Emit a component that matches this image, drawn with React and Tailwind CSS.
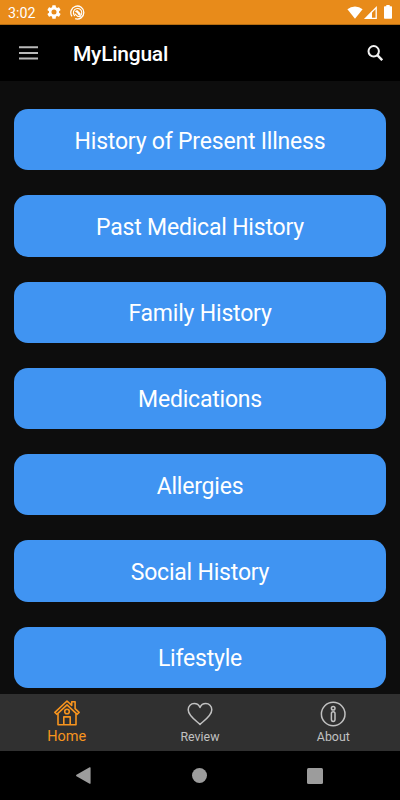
const sections = [
  'History of Present Illness',
  'Past Medical History',
  'Family History',
  'Medications',
  'Allergies',
  'Social History',
  'Lifestyle',
]

const StatusBar = () => (
  <div className="flex h-[25px] shrink-0 items-center border-b border-[#b56d12] bg-[#e88b1a] pl-2 pr-2 text-white">
    <span className="w-[39px] pt-px text-[14.2px] leading-6">3:02</span>
    <svg className="h-[14px] w-[14px]" viewBox="2 2 20 20" fill="currentColor">
      <path d="M19.14 12.94c.04-.3.06-.61.06-.94s-.02-.64-.07-.94l2.03-1.58a.5.5 0 0 0 .12-.61l-1.92-3.32a.5.5 0 0 0-.59-.22l-2.39.96a7 7 0 0 0-1.62-.94l-.36-2.54a.48.48 0 0 0-.48-.41h-3.84a.48.48 0 0 0-.47.41l-.36 2.54c-.59.24-1.13.57-1.62.94l-2.39-.96a.48.48 0 0 0-.59.22L2.74 8.87a.48.48 0 0 0 .12.61l2.03 1.58a6 6 0 0 0 0 1.88l-2.03 1.58a.5.5 0 0 0-.12.61l1.92 3.32c.12.22.37.29.59.22l2.39-.96c.5.38 1.03.7 1.62.94l.36 2.54c.05.24.24.41.48.41h3.84c.24 0 .44-.17.47-.41l.36-2.54a7 7 0 0 0 1.62-.94l2.39.96c.22.08.47 0 .59-.22l1.92-3.32a.48.48 0 0 0-.12-.61zM12 15.6a3.6 3.6 0 1 1 0-7.2 3.6 3.6 0 0 1 0 7.2" />
    </svg>
    <svg className="ml-[9px] h-[15px] w-[15px]" viewBox="0 0 15 15" fill="none" stroke="currentColor">
      <path d="M2 11.3A6.5 6.5 0 1 1 5.2 13.7" strokeWidth="1.3" />
      <path d="M5 11a4.2 4.2 0 1 1 5.4-.2" strokeWidth="1.1" />
      <path d="M4.8 6.2 7.2 4.9l3.3 3.4.3 2.8-2-.6L7.2 8z" fill="currentColor" stroke="none" />
      <path d="m4.6 8.6 3.2 2.8 3 .2" strokeWidth="1.1" />
    </svg>
    <div className="ml-auto flex items-center">
      <svg className="h-[13px] w-[16px]" viewBox="0 0 16 13" fill="currentColor">
        <path d="M.4 3.2a12 12 0 0 1 15.2 0L8 12.7z" />
      </svg>
      <svg className="ml-px h-[13px] w-[13px]" viewBox="0 0 13 13" fill="none" stroke="currentColor">
        <path d="M12.2 1.6v10.7H1.6z" strokeWidth="1.3" />
        <path d="M.4 12.9 8 5.2v7.7z" fill="currentColor" stroke="none" />
      </svg>
      <svg className="ml-[7px] h-[14px] w-2" viewBox="0 0 8 14" fill="currentColor">
        <path d="M2.3 0h3.4v1.3h1.6c.4 0 .7.3.7.7v11c0 .4-.3.7-.7.7H.7A.7.7 0 0 1 0 13V2c0-.4.3-.7.7-.7h1.6z" />
      </svg>
    </div>
  </div>
)

const Header = () => (
  <header className="flex h-14 shrink-0 items-center bg-black pl-[19px] pr-[17px]">
    <svg className="h-[14px] w-[19px] text-[#b9b9b9]" viewBox="0 0 19 14" fill="none" stroke="currentColor" strokeWidth="2">
      <path d="M0 1.2h19M0 6.9h19M0 12.6h19" />
    </svg>
    <h1 className="ml-[35px] mt-px text-[21px] font-medium leading-7 tracking-[-0.25px] text-white">MyLingual</h1>
    <svg className="ml-auto h-4 w-4 text-[#f2f2f2]" viewBox="0 0 16 16" fill="none" stroke="currentColor">
      <circle cx="6.7" cy="6.3" r="5.2" strokeWidth="2" />
      <path d="m10.3 10.2 4.9 5" strokeWidth="2.4" />
    </svg>
  </header>
)

const HomeIcon = () => (
  <svg className="h-[26px] w-[26px]" viewBox="0 0 26 26" fill="none" stroke="currentColor" strokeWidth="1.6" strokeLinejoin="round">
    <path d="M13 1 .9 12.4l1.9 1.9L13 4.8l10.2 9.5 1.9-1.9-4-3.7V1.8h-3.4v3.6z" />
    <path d="M4 13.4v11.4h18V13.4M9.8 24.8v-7.9h6.4v7.9" />
    <circle cx="13" cy="11.5" r="2.3" />
  </svg>
)

const ReviewIcon = () => (
  <svg className="h-[26px] w-[26px]" viewBox="0 0 26 26" fill="none" stroke="currentColor" strokeWidth="1.5" strokeLinejoin="round">
    <path d="M13 23.4C10.6 20.8 1.2 15.2 1.2 8.8c0-3.8 2.8-6.2 6-6.2 2.6 0 4.7 1.3 5.8 3.9 1.1-2.6 3.2-3.9 5.8-3.9 3.2 0 6 2.4 6 6.2 0 6.4-9.4 12-11.8 14.6z" />
  </svg>
)

const AboutIcon = () => (
  <svg className="h-[26px] w-[26px]" viewBox="0 0 26 26" fill="none" stroke="currentColor" strokeWidth="1.5">
    <circle cx="13.2" cy="13" r="11.8" />
    <circle cx="13.2" cy="7.2" r="1.8" />
    <rect x="11.4" y="10.8" width="3.6" height="9.6" rx="1.8" />
  </svg>
)

const TabBar = () => (
  <nav className="grid h-[57px] shrink-0 grid-cols-3 bg-[#303030] pt-[6px] text-[#c1c1c1]">
    <button className="flex flex-col items-center text-[#f7941e]">
      <HomeIcon />
      <span className="pt-px text-[14.5px] leading-5">Home</span>
    </button>
    <button className="flex flex-col items-center pt-px">
      <ReviewIcon />
      <span className="text-[12.4px] leading-5">Review</span>
    </button>
    <button className="flex flex-col items-center pt-px">
      <AboutIcon />
      <span className="text-[12.4px] leading-5">About</span>
    </button>
  </nav>
)

const SystemNav = () => (
  <div className="grid h-[49px] shrink-0 grid-cols-[117px_115px_115px] items-center justify-center justify-items-center bg-black pr-[3px] text-[#9c9c9c]">
    <svg className="h-[17px] w-[15px]" viewBox="0 0 15 17" fill="currentColor">
      <path d="M.5 7.8 13.6.3c.5-.3 1 0 1 .5v15.4c0 .5-.5.8-1 .5L.5 9.2a.8.8 0 0 1 0-1.4z" />
    </svg>
    <div className="h-[15px] w-[15px] rounded-full bg-[#9c9c9c]" />
    <div className="h-4 w-4 rounded-[1.5px] bg-[#9c9c9c]" />
  </div>
)

const App = () => {
  return (
    <div className="flex h-screen flex-col overflow-hidden bg-[#0d0d0d] font-['Roboto',sans-serif]">
      <StatusBar />
      <Header />
      <main className="flex min-h-0 flex-1 flex-col gap-[25px] overflow-hidden px-[14px] pt-7">
        {sections.map((name) => (
          <button
            key={name}
            className="h-[61.25px] shrink-0 rounded-[14px] bg-[#4094f2] pt-[4px] text-[23px] leading-7 tracking-[-0.2px] text-white"
          >
            {name}
          </button>
        ))}
      </main>
      <TabBar />
      <SystemNav />
    </div>
  )
}

export default App
